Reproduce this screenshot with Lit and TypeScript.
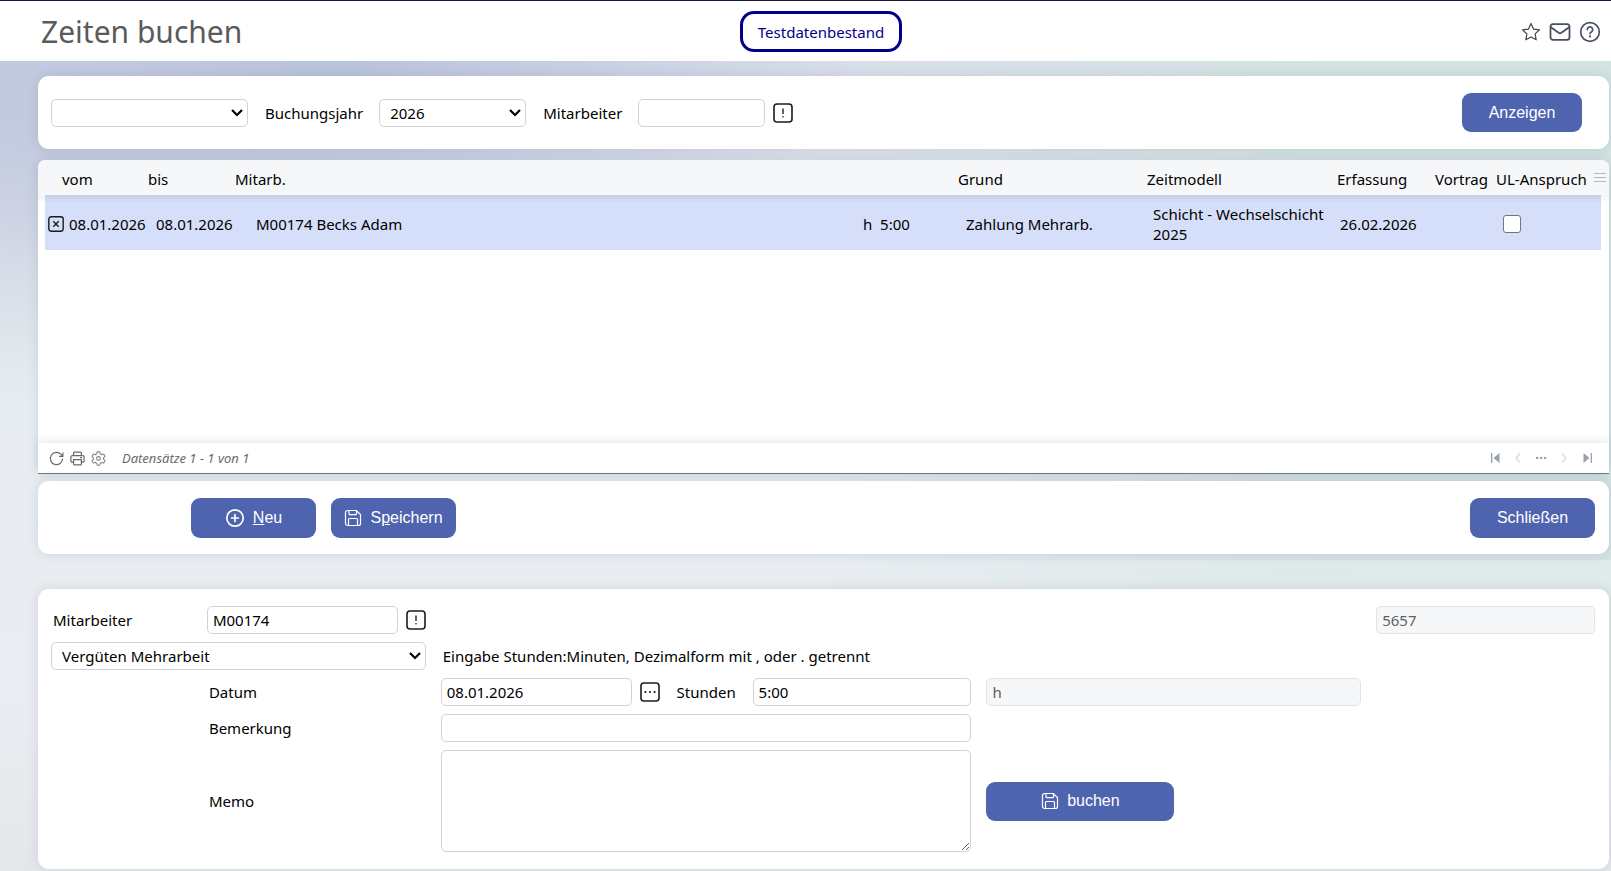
import { LitElement, html, css, svg } from "lit";
import { customElement } from "lit/decorators.js";

const saveIcon = html`<svg class="ico" width="18" height="18" viewBox="0 0 18 18" fill="none" stroke="currentColor" stroke-width="1.2" stroke-linejoin="round" aria-hidden="true">
  <path d="M3.5 1.5h8.7l4.3 4v9a2 2 0 0 1-2 2h-11a2 2 0 0 1-2-2v-11a2 2 0 0 1 2-2z"/>
  <path d="M5 1.5v3.2a1 1 0 0 0 1 1h5.5a1 1 0 0 0 1-1V1.8M4.5 16.5v-6a1 1 0 0 1 1-1h7a1 1 0 0 1 1 1v6"/></svg>`;

const plusIcon = html`<svg class="ico" width="20" height="20" viewBox="0 0 20 20" fill="none" stroke="currentColor" stroke-width="1.7" stroke-linecap="round" aria-hidden="true">
  <circle cx="10" cy="10" r="8.2"/><path d="M10 6.6v6.8M6.6 10h6.8"/></svg>`;

const boxIcon = (inner: unknown) => html`<svg width="20" height="20" viewBox="0 0 20 20" fill="none" stroke="#1c1c1c" stroke-width="1.6" aria-hidden="true">
  <rect x="1" y="1" width="18" height="18" rx="3"/>${inner}</svg>`;

const hintIcon = boxIcon(svg`<path d="M10 5.5v5.5" stroke-width="1.4"/><circle cx="10" cy="13.8" r=".8" fill="#1c1c1c" stroke="none"/>`);
const dotsIcon = boxIcon(svg`<g fill="#1c1c1c" stroke="none"><circle cx="5.4" cy="10" r="1.1"/><circle cx="10" cy="10" r="1.1"/><circle cx="14.6" cy="10" r="1.1"/></g>`);

@customElement("app-root")
export class AppRoot extends LitElement {
  static styles = css`
    :host {
      display: flex;
      flex-direction: column;
      box-sizing: border-box;
      min-height: 100vh;
      font: 15px/20px "Noto Sans", sans-serif;
      color: #000;
      background:
        radial-gradient(ellipse 520px 260px at 330px 60px, #b9c2dc, transparent),
        radial-gradient(ellipse 420px 300px at 0 100px, #c6cddf, transparent),
        linear-gradient(to right, transparent 50%, #d3e2e2 82%, #d3e2e2) 0 0 / 100% 560px no-repeat,
        linear-gradient(to right, transparent 50%, #dfe9ea 80%, #dfeae9) 0 560px / 100% 200px no-repeat,
        linear-gradient(#d5dae8, #e7ecf0 350px, #e9edf1 700px, #e4e7ea);
    }
    * { box-sizing: border-box; }
    .top {
      display: grid;
      grid-template-columns: 1fr auto 1fr;
      align-items: center;
      height: 61px;
      padding: 1px 10px 0 41px;
      background: #fff;
      border-top: 1px solid #14193a;
    }
    h1 { margin: 0; font-size: 30px; line-height: 40px; font-weight: 400; color: #5a5a5a; }
    .pill {
      padding: 8px 15px 7px;
      border: 3px solid #00008b;
      border-radius: 14px;
      color: #00008b;
    }
    .tools { display: flex; justify-content: flex-end; align-items: center; gap: 8px; }
    .plain { display: flex; align-items: center; justify-content: center; padding: 0; border: 0; background: none; color: inherit; flex: none; }
    main { display: flex; flex-direction: column; padding: 15px 2px 3px 38px; }
    .card { background: #fff; border-radius: 11px; box-shadow: 0 0 12px rgba(40, 50, 80, .12); }
    .filter { display: flex; align-items: center; height: 73px; padding: 0 27px 0 13px; }
    .filter label { margin: 0 16px 0 17px; }
    .push { margin-left: auto; }

    select, input, textarea {
      display: block;
      height: 28px;
      margin: 0;
      padding: 0 5px;
      border: 1px solid #d2d2d2;
      border-radius: 5px;
      background: #fff;
      font: inherit;
      color: #000;
      min-width: 0;
    }
    select {
      appearance: none;
      padding: 0 24px 0 10px;
      background: #fff url("data:image/svg+xml,%3Csvg xmlns='http://www.w3.org/2000/svg' width='12' height='8'%3E%3Cpath d='M1 1l5 5 5-5' fill='none' stroke='%23000' stroke-width='2.2'/%3E%3C/svg%3E") no-repeat right 4px center;
    }
    input:disabled { background: #f6f7f9; border-color: #e2e3e5; color: #5f5f5f; }
    .w-kind { width: 197px; }
    .w-year { width: 147px; }
    .w-emp { width: 127px; margin-right: 8px; }
    .btn {
      display: inline-flex;
      align-items: center;
      justify-content: center;
      gap: 8px;
      width: 125px;
      height: 40px;
      padding: 0;
      border: 0;
      border-radius: 9px;
      background: #4f64af;
      color: #fff;
      font: 16px/20px "Liberation Sans", Arial, sans-serif;
    }
    .btn.show { width: 120px; height: 39px; }
    .btn.book { width: 188px; height: 39px; }

    .list {
      display: flex;
      flex-direction: column;
      margin-top: 11px;
      border-bottom: 1px solid #6f7a7e;
      border-radius: 8px 8px 0 0;
      background: #fff;
      box-shadow: 0 0 12px rgba(40, 50, 80, .12);
    }
    .rows { min-height: 283px; }
    table { width: 100%; table-layout: fixed; border-collapse: collapse; }
    th { height: 35px; padding: 2px 0 0 6px; background: #f6f7f9; font-weight: 400; text-align: left; white-space: nowrap; }
    th:first-child { border-top-left-radius: 8px; }
    th:last-child { border-top-right-radius: 8px; padding: 0; }
    th.first { padding-left: 17px; }
    td { height: 55px; padding: 2px 0 0 12px; background: linear-gradient(rgba(40, 50, 90, .1), transparent 8px) #d6dffa; }
    td.edge { padding: 0; background: linear-gradient(rgba(0, 0, 0, .05), transparent 8px); }
    td.first { padding-left: 3px; }
    td.near { padding-left: 9px; }
    td.till { padding-left: 14px; }
    td.name { padding-left: 27px; }
    td.hours { padding-left: 24px; white-space: pre; }
    td.grund { padding-left: 14px; }
    .cell { display: flex; align-items: center; gap: 5px; }
    input.tick {
      appearance: none;
      width: 18px;
      height: 18px;
      padding: 0;
      border: 1px solid #767676;
      border-radius: 3px;
      margin-left: 1px;
    }
    .foot {
      display: flex;
      align-items: center;
      height: 30px;
      padding: 0 14px 0 11px;
      gap: 6px;
      border-radius: 0 0 8px 8px;
      box-shadow: 0 -3px 8px rgba(0, 0, 0, .08);
      color: #6a6a6a;
    }
    .count { margin-left: 10px; font-size: 13px; font-style: italic; }
    .pager { display: flex; align-items: center; gap: 7px; margin-left: auto; }

    .actions { display: flex; align-items: center; gap: 15px; height: 73px; margin-top: 7px; padding: 0 14px 0 153px; }
    .form {
      display: grid;
      grid-template-columns: repeat(20, minmax(0, 1fr));
      gap: 8px 15px;
      align-items: center;
      margin-top: 35px;
      padding: 17px 14px 17px 13px;
    }
    .form > label, .form > p { margin: 0; padding-left: 2px; white-space: nowrap; }
    .with-icon { display: flex; align-items: center; gap: 8px; }
    .with-icon input { flex: 1; }
    .c1 { grid-column: 1 / span 2; }
    .c1w { grid-column: 1 / span 5; }
    .c3 { grid-column: 3 / span 3; }
    .c6 { grid-column: 6 / span 3; }
    .c6w { grid-column: 6 / span 7; }
    .c9 { grid-column: 9 / span 1; }
    .c10 { grid-column: 10 / span 3; }
    .c13 { grid-column: 13 / span 5; }
    .c18 { grid-column: 18 / span 3; }
    textarea { width: 100%; height: 102px; resize: both; }
  `;

  render() {
    return html`
      <header class="top">
        <h1>Zeiten buchen</h1>
        <div class="pill">Testdatenbestand</div>
        <div class="tools">
          <button class="plain" aria-label="Favorit"><svg width="20" height="20" viewBox="0 0 20 20" fill="none" stroke="#444" stroke-width="1.2" stroke-linejoin="round"><path d="M10 1.6l2.5 5.5 6 .7-4.4 4.1 1.1 5.9L10 14.9l-5.2 2.9 1.1-5.9L1.5 7.8l6-.7z"/></svg></button>
          <button class="plain" aria-label="Nachricht"><svg width="22" height="22" viewBox="0 0 22 22" fill="none" stroke="#4a5164" stroke-width="1.8" stroke-linejoin="round"><rect x="1.5" y="3.2" width="19" height="15.6" rx="2.6"/><path d="M1.8 6.2l7.9 5.6a2.2 2.2 0 0 0 2.6 0l7.9-5.6"/></svg></button>
          <button class="plain" aria-label="Hilfe"><svg width="22" height="22" viewBox="0 0 22 22" fill="none" stroke="#4a5164" stroke-width="1.7" stroke-linecap="round"><circle cx="11" cy="11" r="9.3"/><path d="M8.3 8.6a2.7 2.7 0 1 1 4.1 2.3c-.9.5-1.4.9-1.4 1.7"/><circle cx="11" cy="15.4" r="1.1" fill="#4a5164" stroke="none"/></svg></button>
        </div>
      </header>

      <main>
        <section class="card filter">
          <select class="w-kind" aria-label="Auswahl"><option></option></select>
          <label for="year">Buchungsjahr</label>
          <select class="w-year" id="year"><option>2026</option></select>
          <label for="emp">Mitarbeiter</label>
          <input class="w-emp" id="emp" type="text" />
          <button class="plain" aria-label="Mitarbeiter wählen">${hintIcon}</button>
          <button class="btn show push">Anzeigen</button>
        </section>

        <section class="list">
          <div class="rows">
            <table>
              <colgroup>
                <col style="width:7px" /><col style="width:97px" /><col style="width:87px" /><col /><col style="width:113px" />
                <col style="width:189px" /><col style="width:190px" /><col style="width:98px" /><col style="width:61px" />
                <col style="width:102px" /><col style="width:9px" /><col style="width:8px" />
              </colgroup>
              <thead>
                <tr>
                  <th></th><th class="first">vom</th><th>bis</th><th>Mitarb.</th><th></th><th>Grund</th>
                  <th>Zeitmodell</th><th>Erfassung</th><th>Vortrag</th><th>UL-Anspruch</th>
                  <th colspan="2"><button class="plain" aria-label="Spalten"><svg width="17" height="16" viewBox="0 0 17 16" stroke="#b4b7bb" stroke-width="1.2"><path d="M2 3.5h12M2 7.5h12M2 11.5h12"/></svg></button></th>
                </tr>
              </thead>
              <tbody>
                <tr>
                  <td class="edge"></td>
                  <td class="first"><div class="cell"><button class="plain" aria-label="Löschen"><svg width="16" height="16" viewBox="0 0 16 16" fill="none" stroke="#1c1c1c" stroke-width="1.4"><rect x=".8" y=".8" width="14.4" height="14.4" rx="2.4"/><path d="M5.3 5.3l5.4 5.4M10.7 5.3l-5.4 5.4"/></svg></button>08.01.2026</div></td>
                  <td class="till">08.01.2026</td>
                  <td class="name">M00174 Becks Adam</td>
                  <td class="hours">h  5:00</td>
                  <td class="grund">Zahlung Mehrarb.</td>
                  <td>Schicht - Wechselschicht 2025</td>
                  <td class="near">26.02.2026</td>
                  <td></td>
                  <td colspan="2"><input class="tick" type="checkbox" aria-label="UL-Anspruch" /></td>
                  <td class="edge"></td>
                </tr>
              </tbody>
            </table>
          </div>
          <div class="foot">
            <button class="plain" aria-label="Aktualisieren"><svg width="15" height="15" viewBox="0 0 15 15" fill="none" stroke="currentColor" stroke-width="1.2"><path d="M13.6 7.6a6.1 6.1 0 1 1-1.6-4.2l1.8 1.8M13.9 1.4v3.9h-3.9"/></svg></button>
            <button class="plain" aria-label="Drucken"><svg width="15" height="15" viewBox="0 0 15 15" fill="none" stroke="currentColor" stroke-width="1.2" stroke-linejoin="round"><path d="M3.6 4.6V2.1a1 1 0 0 1 1-1h5.8a1 1 0 0 1 1 1v2.5M3.6 11.2H2.2A1.3 1.3 0 0 1 .9 9.900V6a1.300 1.300 0 0 1 1.300-1.300h10.600A1.300 1.300 0 0 1 14.100 6v3.900a1.300 1.300 0 0 1-1.300 1.300h-1.400M3.600 8.700h7.800v4.200a1 1 0 0 1-1 1H4.600a1 1 0 0 1-1-1zM10 6.700h2"/></svg></button>
            <button class="plain" aria-label="Einstellungen"><svg width="15" height="15" viewBox="0 0 15 15" fill="none" stroke="#858585" stroke-width="1.1" stroke-linejoin="round"><path d="M6.200.9h2.600l.5 1.900 1.500.9 1.900-.6 1.300 2.300-1.400 1.400v1.500l1.400 1.400-1.300 2.300-1.900-.6-1.500.9-.5 1.900H6.200l-.5-1.900-1.500-.9-1.900.6L1 9.700l1.400-1.400V6.800L1 5.400l1.300-2.300 1.900.6 1.500-.9z"/><circle cx="7.500" cy="7.500" r="1.900"/></svg></button>
            <span class="count">Datensätze 1 - 1 von 1</span>
            <nav class="pager" aria-label="Seiten">
              <button class="plain" aria-label="Erste Seite"><svg width="16" height="12" viewBox="0 0 16 12" fill="#98a2ad"><path d="M4 1h1.300v10H4zM12.500 1v10L6.500 6z"/></svg></button>
              <button class="plain" aria-label="Zurück"><svg width="16" height="12" viewBox="0 0 16 12" fill="none" stroke="#d6dade" stroke-width="1.300"><path d="M10 1.500L6 6l4 4.500"/></svg></button>
              <button class="plain" aria-label="Seite wählen"><svg width="16" height="12" viewBox="0 0 16 12" fill="#98a2ad"><path d="M3 5h2.300v2H3zM7 5h2.300v2H7zM11 5h2.300v2H11z"/></svg></button>
              <button class="plain" aria-label="Weiter"><svg width="16" height="12" viewBox="0 0 16 12" fill="none" stroke="#d6dade" stroke-width="1.300"><path d="M6 1.500L10 6l-4 4.500"/></svg></button>
              <button class="plain" aria-label="Letzte Seite"><svg width="16" height="12" viewBox="0 0 16 12" fill="#98a2ad"><path d="M11.700 1H13v10h-1.300zM4.500 1v10l6-5z"/></svg></button>
            </nav>
          </div>
        </section>

        <section class="card actions">
          <button class="btn">${plusIcon}<span><u>N</u>eu</span></button>
          <button class="btn">${saveIcon}<span>S<u>p</u>eichern</span></button>
          <button class="btn push">Schließen</button>
        </section>

        <section class="card form">
          <label class="c1" for="ma">Mitarbeiter</label>
          <div class="c3 with-icon"><input id="ma" type="text" value="M00174" /><button class="plain" aria-label="Mitarbeiter wählen">${hintIcon}</button></div>
          <input class="c18" type="text" value="5657" aria-label="Nummer" disabled />

          <select class="c1w" aria-label="Buchungsart"><option>Vergüten Mehrarbeit</option></select>
          <p class="c6w">Eingabe Stunden:Minuten, Dezimalform mit , oder . getrennt</p>

          <label class="c3" for="date">Datum</label>
          <div class="c6 with-icon"><input id="date" type="text" value="08.01.2026" /><button class="plain" aria-label="Datum wählen">${dotsIcon}</button></div>
          <label class="c9" for="hours">Stunden</label>
          <input class="c10" id="hours" type="text" value="5:00" />
          <input class="c13" type="text" value="h" aria-label="Einheit" disabled />

          <label class="c3" for="note">Bemerkung</label>
          <input class="c6w" id="note" type="text" />

          <label class="c3" for="memo">Memo</label>
          <textarea class="c6w" id="memo"></textarea>
          <button class="btn book c13">${saveIcon}<span>buchen</span></button>
        </section>
      </main>
    `;
  }
}
